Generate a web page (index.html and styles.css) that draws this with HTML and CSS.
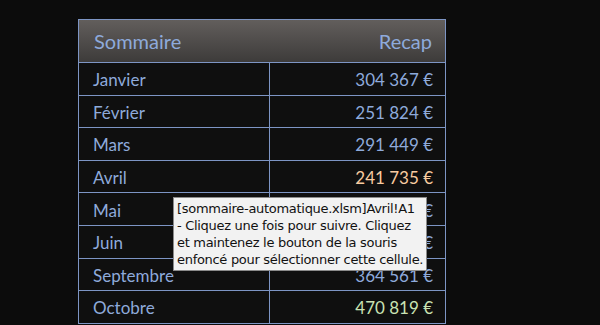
FILE: index.html
```html
<!DOCTYPE html>
<html lang="fr">
<head>
<meta charset="utf-8">
<link rel="stylesheet" href="styles.css">
</head>
<body>
<div class="page">
  <div class="sheet">
    <div class="head">
      <span>Sommaire</span>
      <span>Recap</span>
    </div>
    <div class="row"><div class="c1">Janvier</div><div class="c2">304 367 €</div></div>
    <div class="row"><div class="c1">Février</div><div class="c2">251 824 €</div></div>
    <div class="row"><div class="c1">Mars</div><div class="c2">291 449 €</div></div>
    <div class="row"><div class="c1">Avril</div><div class="c2 peach">241 735 €</div></div>
    <div class="row"><div class="c1">Mai</div><div class="c2">318 052 €</div></div>
    <div class="row"><div class="c1">Juin</div><div class="c2">286 913 €</div></div>
    <div class="row"><div class="c1">Septembre</div><div class="c2">364 561 €</div></div>
    <div class="row"><div class="c1">Octobre</div><div class="c2 green">470 819 €</div></div>
  </div>
  <div class="tip">[sommaire-automatique.xlsm]Avril!A1<br>- Cliquez une fois pour suivre. Cliquez<br>et maintenez le bouton de la souris<br>enfoncé pour sélectionner cette cellule.</div>
</div>
</body>
</html>
```
FILE: styles.css
```css
html, body {
  margin: 0;
  padding: 0;
  background: #0c0c0c;
  overflow: hidden;
}
.page {
  position: relative;
  width: 600px;
  height: 325px;
  padding: 19px 0 0 78px;
  box-sizing: border-box;
  font-family: Lato, "Open Sans", sans-serif;
  color: #8eaadb;
}
.sheet {
  width: 368px;
  border: 1px solid #7d95c4;
  border-bottom: none;
  box-sizing: border-box;
  background: #0f0f0f;
}
.head {
  height: 43px;
  box-sizing: border-box;
  border-bottom: 1px solid #7d95c4;
  background: linear-gradient(#625e5c, #3d3b3a);
  display: flex;
  justify-content: space-between;
  align-items: center;
  padding: 0 13px 0 15px;
  font-size: 20px;
}
.row {
  display: grid;
  grid-template-columns: 191px 1fr;
  height: 32.6px;
  box-sizing: border-box;
  border-bottom: 1px solid #7d95c4;
  font-size: 17px;
}
.c1 {
  border-right: 1px solid #7d95c4;
  padding: 2px 0 0 14px;
  display: flex;
  align-items: center;
}
.c2 {
  display: flex;
  align-items: center;
  justify-content: flex-end;
  padding: 2px 12px 0 0;
}
.peach { color: #f8cba0; }
.green { color: #c9e2b3; }
.tip {
  position: absolute;
  left: 173px;
  top: 197px;
  width: 254px;
  height: 74px;
  box-sizing: border-box;
  background: #f2f2f2;
  border: 1px solid #8a8a8a;
  padding: 2px 0 0 3px;
  font-family: "DejaVu Sans", sans-serif;
  font-size: 13px;
  line-height: 17px;
  color: #111;
  white-space: nowrap;
  letter-spacing: -0.3px;
}
```
